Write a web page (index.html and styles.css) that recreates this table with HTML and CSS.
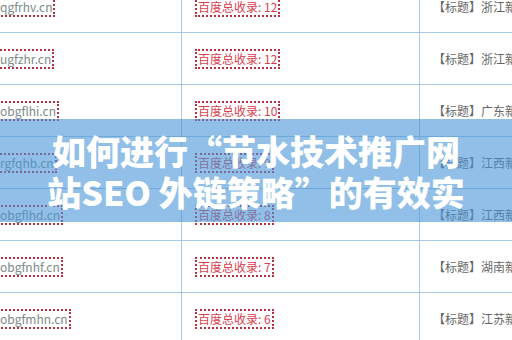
FILE: index.html
```html
<!DOCTYPE html>
<html lang="zh-CN">
<head>
<meta charset="utf-8">
<link rel="stylesheet" href="styles.css">
</head>
<body>
<div class="page">
  <div class="table">
    <div class="row">
      <div class="cell c1"><span class="domain">qgfrhv.cn</span></div>
      <div class="cell c2"><span class="count">百度总收录: 12</span></div>
      <div class="cell c3">【标题】浙江新闻网站排名</div>
    </div>
    <div class="row">
      <div class="cell c1"><span class="domain">ugfzhr.cn</span></div>
      <div class="cell c2"><span class="count">百度总收录: 12</span></div>
      <div class="cell c3">【标题】浙江新闻网站排名</div>
    </div>
    <div class="row">
      <div class="cell c1"><span class="domain">obgflhi.cn</span></div>
      <div class="cell c2"><span class="count">百度总收录: 10</span></div>
      <div class="cell c3">【标题】广东新闻网站排名</div>
    </div>
    <div class="row">
      <div class="cell c1"><span class="domain">rgfqhb.cn</span></div>
      <div class="cell c2"><span class="count">百度总收录: 9</span></div>
      <div class="cell c3">【标题】江西新闻网站排名</div>
    </div>
    <div class="row">
      <div class="cell c1"><span class="domain">obgflhd.cn</span></div>
      <div class="cell c2"><span class="count">百度总收录: 8</span></div>
      <div class="cell c3">【标题】江西新闻网站排名</div>
    </div>
    <div class="row">
      <div class="cell c1"><span class="domain">obgfnhf.cn</span></div>
      <div class="cell c2"><span class="count">百度总收录: 7</span></div>
      <div class="cell c3">【标题】湖南新闻网站排名</div>
    </div>
    <div class="row">
      <div class="cell c1"><span class="domain">obgfmhn.cn</span></div>
      <div class="cell c2"><span class="count">百度总收录: 6</span></div>
      <div class="cell c3">【标题】江苏新闻网站排名</div>
    </div>
  </div>
  <div class="banner">
    <h1 class="title"><span class="line">如何进行“节水技术推广网</span><span class="line">站SEO 外链策略”的有效实</span></h1>
  </div>
</div>
</body>
</html>
```
FILE: styles.css
```css
html, body {
  margin: 0;
  padding: 0;
  background: #ffffff;
}
body {
  width: 512px;
  height: 340px;
  overflow: hidden;
  font-family: "Noto Sans CJK SC", "Noto Sans", sans-serif;
}
.page {
  position: relative;
  width: 512px;
  height: 340px;
  overflow: hidden;
}
.table {
  margin-left: -3px;
  margin-top: -19px;
  display: flex;
  flex-direction: column;
}
.row {
  display: grid;
  grid-template-columns: 185px 238px 300px;
  height: 52px;
}
.cell {
  box-sizing: border-box;
  border-right: 1px solid #a9c9e9;
  border-bottom: 1px solid #a9c9e9;
  display: flex;
  align-items: center;
  white-space: nowrap;
  overflow: hidden;
  font-size: 12px;
}
.c1 {
  padding-left: 0;
}
.c2 {
  padding-left: 13px;
}
.c3 {
  padding-left: 13px;
  color: #666666;
  border-right: none;
}
.domain, .count {
  display: inline-block;
  border: 2px dotted #b8303e;
  padding: 0 1px;
  line-height: 16px;
}
.domain {
  color: #7d8a88;
}
.count {
  color: #d8404c;
}
.banner {
  position: absolute;
  left: 0;
  right: 0;
  top: 119px;
  height: 103px;
  background: rgba(72, 148, 215, 0.6);
  display: flex;
  align-items: center;
  justify-content: center;
}
.title {
  margin: 0;
  color: #ffffff;
  font-family: "Noto Sans CJK SC", sans-serif;
  font-weight: 900;
  font-size: 34px;
  line-height: 41px;
  text-align: center;
}
.line {
  display: block;
  white-space: nowrap;
}
```
